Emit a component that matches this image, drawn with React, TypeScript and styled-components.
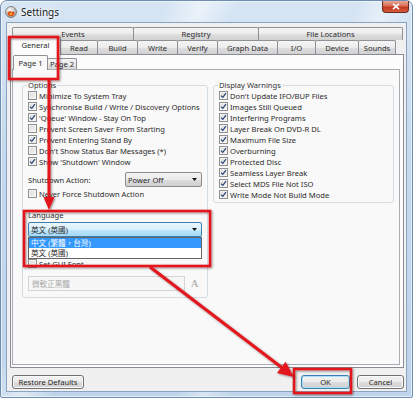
import styled, { createGlobalStyle } from "styled-components";

const GlobalStyle = createGlobalStyle`
  html, body {
    margin: 0;
    padding: 0;
    background: #ffffff;
  }
  body {
    font-family: "Noto Sans", "Noto Sans CJK TC", sans-serif;
    font-size: 7.6px;
    color: #2b2b2b;
  }
`;

const Stage = styled.div`
  position: relative;
  width: 415px;
  height: 400px;
  overflow: hidden;
`;

const Window = styled.div`
  width: 413px;
  height: 398px;
  box-sizing: border-box;
  border: 1px solid #6f8db0;
  border-radius: 7px 7px 2px 2px;
  padding: 0 5px 5px;
  display: flex;
  flex-direction: column;
  background:
    linear-gradient(
      115deg,
      rgba(255, 255, 255, 0) 0 28%,
      rgba(255, 255, 255, 0.5) 34%,
      rgba(255, 255, 255, 0) 40% 60%,
      rgba(255, 255, 255, 0.4) 65%,
      rgba(255, 255, 255, 0) 70%
    ),
    linear-gradient(180deg, #d6e5f4 0%, #c4d9ee 40%, #bed4ec 100%);
  box-shadow: inset 0 0 0 1px rgba(255, 255, 255, 0.55);
`;

const TitleBar = styled.div`
  height: 21px;
  margin: 0 -5px;
  padding: 0 3px 0 4px;
  display: flex;
  align-items: center;
  gap: 4px;
`;

const Title = styled.span`
  flex: 1;
  font-size: 10px;
  color: #1a1a1a;
  text-shadow: 0 0 6px #ffffff, 0 0 3px #ffffff;
`;

const CloseButton = styled.div`
  align-self: flex-start;
  width: 27px;
  height: 12px;
  box-sizing: border-box;
  border: 1px solid #6b2a1e;
  border-top: none;
  border-radius: 0 0 4px 4px;
  background: linear-gradient(#eaa897 0%, #d76d55 45%, #c2381f 55%, #d45c3c 100%);
  display: flex;
  align-items: center;
  justify-content: center;
`;

const Client = styled.div`
  flex: 1;
  background: #f0f0f0;
  border: 1px solid #8aa3bf;
  padding: 4px 2px 2px 3px;
  display: flex;
  flex-direction: column;
`;

const TabRow = styled.div<{ $h: number; $indent: number }>`
  display: flex;
  align-items: flex-start;
  height: ${(p) => p.$h}px;
  margin-left: ${(p) => p.$indent}px;
`;

const Tab = styled.div<{ $w: number; $active?: boolean }>`
  width: ${(p) => p.$w}px;
  height: ${(p) => (p.$active ? "18px" : "100%")};
  margin-top: ${(p) => (p.$active ? "-3px" : "0")};
  margin-right: -1px;
  box-sizing: border-box;
  border: 1px solid #8e9196;
  border-bottom: none;
  border-radius: 2px 2px 0 0;
  position: relative;
  z-index: ${(p) => (p.$active ? 2 : 0)};
  display: flex;
  align-items: center;
  justify-content: center;
  padding-bottom: ${(p) => (p.$active ? "3px" : "0")};
  white-space: nowrap;
  background: ${(p) =>
    p.$active
      ? "#fcfcfc"
      : "linear-gradient(#f4f4f4 0%, #ececec 50%, #dedede 51%, #d2d2d2 100%)"};
`;

const Panel = styled.div`
  flex: 1;
  border: 1px solid #898c95;
  background: #fcfcfc;
  display: flex;
  flex-direction: column;
`;

const PageRow = styled.div`
  display: flex;
  align-items: flex-start;
  height: 14px;
  padding-left: 2px;
`;

const PageTab = styled.div<{ $w: number; $active?: boolean }>`
  width: ${(p) => p.$w}px;
  height: ${(p) => (p.$active ? "15px" : "11px")};
  margin-top: ${(p) => (p.$active ? "0" : "3px")};
  margin-right: -1px;
  box-sizing: border-box;
  border: 1px solid #8e9196;
  border-bottom: none;
  border-radius: 2px 2px 0 0;
  position: relative;
  z-index: ${(p) => (p.$active ? 2 : 0)};
  display: flex;
  align-items: center;
  justify-content: center;
  padding-bottom: ${(p) => (p.$active ? "1px" : "0")};
  background: ${(p) =>
    p.$active ? "#f9f9f9" : "linear-gradient(#f4f4f4 0%, #e8e8e8 55%, #d6d6d6 100%)"};
`;

const PagePanel = styled.div`
  flex: 1;
  margin: 0 3px 2px 1px;
  border: 1px solid #a9acb2;
  background: #f9f9f9;
  display: grid;
  grid-template-columns: 186px 181px;
  column-gap: 5px;
  align-items: start;
  align-content: start;
  padding: 10px 0 0 9px;
`;

const Group = styled.fieldset<{ $pb: number }>`
  margin: 0;
  min-width: 0;
  padding: 0 5px ${(p) => p.$pb}px 5px;
  border: 1px solid #d3dce3;
  border-radius: 3px;
`;

const Legend = styled.legend`
  padding: 0 1px;
  margin-left: -1px;
  line-height: 10px;
  color: #333333;
`;

const Stack = styled.div`
  display: flex;
  flex-direction: column;
`;

const CheckRow = styled.div<{ $mt?: number }>`
  display: flex;
  align-items: center;
  gap: 2px;
  height: 11px;
  margin-top: ${(p) => p.$mt ?? 0}px;
  white-space: nowrap;
`;

const Box = styled.span`
  width: 9px;
  height: 9px;
  flex: none;
  box-sizing: border-box;
  border: 1px solid #8f8f8f;
  background: linear-gradient(135deg, #d9d9d9 0%, #f7f7f7 100%);
  box-shadow: inset 0 0 0 1px #f4f4f4;
  display: flex;
  align-items: center;
  justify-content: center;
`;

const FieldRow = styled.div<{ $mt: number }>`
  display: flex;
  align-items: center;
  justify-content: space-between;
  height: 15px;
  margin-top: ${(p) => p.$mt}px;
`;

const Label = styled.div<{ $mt: number }>`
  line-height: 10px;
  margin-top: ${(p) => p.$mt}px;
`;

const Select = styled.div<{ $w?: number; $hover?: boolean }>`
  width: ${(p) => (p.$w ? `${p.$w}px` : "100%")};
  height: 15px;
  box-sizing: border-box;
  border: 1px solid ${(p) => (p.$hover ? "#3c7fb1" : "#8c8c8c")};
  border-radius: 2px;
  padding: 0 4px 0 2px;
  display: flex;
  align-items: center;
  justify-content: space-between;
  background: ${(p) =>
    p.$hover
      ? "linear-gradient(#eaf6fd 0%, #d9f0fc 50%, #bee6fd 51%, #a7d9f5 100%)"
      : "linear-gradient(#f2f2f2 0%, #ebebeb 50%, #dddddd 51%, #cfcfcf 100%)"};
`;

const ComboWrap = styled.div`
  position: relative;
  margin-top: 2px;
`;

const DropList = styled.div`
  position: absolute;
  top: 100%;
  left: 0;
  right: 0;
  z-index: 5;
  border: 1px solid #646464;
  background: #ffffff;
`;

const DropItem = styled.div<{ $sel?: boolean }>`
  height: 10px;
  line-height: 10px;
  padding-left: 2px;
  color: ${(p) => (p.$sel ? "#ffffff" : "#1e1e1e")};
  background: ${(p) => (p.$sel ? "#3399ff" : "transparent")};
`;

const FontRow = styled.div`
  display: flex;
  align-items: center;
  gap: 6px;
  margin-top: 7px;
`;

const TextBox = styled.div`
  width: 157px;
  height: 15px;
  box-sizing: border-box;
  border: 1px solid #d5d5d5;
  background: #f7f7f7;
  padding-left: 3px;
  display: flex;
  align-items: center;
  color: #a8a8a8;
`;

const FontIcon = styled.span`
  font-family: "Liberation Serif", serif;
  font-size: 10px;
  font-weight: bold;
  color: #b4b4b4;
`;

const Footer = styled.div`
  display: flex;
  align-items: center;
  gap: 7px;
  height: 14px;
  margin-top: 7px;
  padding-left: 2px;
`;

const Spacer = styled.div`
  flex: 1;
`;

const Button = styled.div<{ $w: number; $default?: boolean }>`
  width: ${(p) => p.$w}px;
  height: 14px;
  box-sizing: border-box;
  border: 1px solid ${(p) => (p.$default ? "#3c7fb1" : "#707070")};
  border-radius: 3px;
  display: flex;
  align-items: center;
  justify-content: center;
  background: linear-gradient(#f2f2f2 0%, #ebebeb 50%, #dddddd 51%, #cfcfcf 100%);
  box-shadow: ${(p) =>
    p.$default ? "inset 0 0 0 1px #a9def5" : "inset 0 0 0 1px #fbfbfb"};
`;

const Marks = styled.svg`
  position: absolute;
  top: 0;
  left: 0;
  pointer-events: none;
  z-index: 10;
`;

const options: [string, boolean][] = [
  ["Minimize To System Tray", false],
  ["Synchronise Build / Write / Discovery Options", true],
  ["'Queue' Window - Stay On Top", true],
  ["Prevent Screen Saver From Starting", false],
  ["Prevent Entering Stand By", true],
  ["Don't Show Status Bar Messages (*)", false],
  ["Show 'Shutdown' Window", true],
];

const warnings = [
  "Don't Update IFO/BUP Files",
  "Images Still Queued",
  "Interfering Programs",
  "Layer Break On DVD-R DL",
  "Maximum File Size",
  "Overburning",
  "Protected Disc",
  "Seamless Layer Break",
  "Select MDS File Not ISO",
  "Write Mode Not Build Mode",
];

const topTabs: [string, number][] = [
  ["Events", 122],
  ["Registry", 126],
  ["File Locations", 145],
];

const mainTabs: [string, number][] = [
  ["General", 51],
  ["Read", 38],
  ["Build", 41],
  ["Write", 41],
  ["Verify", 41],
  ["Graph Data", 61],
  ["I/O", 39],
  ["Device", 44],
  ["Sounds", 38],
];

function Check({ on }: { on: boolean }) {
  return (
    <Box>
      {on ? (
        <svg width="7" height="7" viewBox="0 0 7 7">
          <path d="M1 3.6 L2.8 5.4 L6 1.2" fill="none" stroke="#2a4275" strokeWidth="1.2" />
        </svg>
      ) : null}
    </Box>
  );
}

function Arrow() {
  return (
    <svg width="5" height="3" viewBox="0 0 5 3">
      <path d="M0 0 H5 L2.5 3 Z" fill="#111" />
    </svg>
  );
}

function AppIcon() {
  return (
    <svg width="12" height="12" viewBox="0 0 12 12">
      <defs>
        <radialGradient id="disc" cx="40%" cy="35%" r="70%">
          <stop offset="0" stopColor="#ffffff" />
          <stop offset="1" stopColor="#9a9a9a" />
        </radialGradient>
      </defs>
      <circle cx="6" cy="6" r="5.5" fill="url(#disc)" stroke="#6d6d6d" strokeWidth="0.8" />
      <path d="M2.4 6.6 A3.6 3.6 0 0 0 9.6 6.6 Q8 4.6 6.6 6.2 Q5.4 3.6 2.4 6.6 Z" fill="#e0541c" />
      <path d="M4.3 8 Q6 5.8 7.6 8 Q6 9.4 4.3 8 Z" fill="#f7c23a" />
    </svg>
  );
}

function App() {
  return (
    <Stage>
      <GlobalStyle />
      <Window>
        <TitleBar>
          <AppIcon />
          <Title>Settings</Title>
          <CloseButton>
            <svg width="8" height="7" viewBox="0 0 8 7">
              <path d="M1 0.8 L7 6.2 M7 0.8 L1 6.2" stroke="#ffffff" strokeWidth="1.6" />
            </svg>
          </CloseButton>
        </TitleBar>
        <Client>
          <TabRow $h={13} $indent={2}>
            {topTabs.map(([t, w]) => (
              <Tab key={t} $w={w}>
                {t}
              </Tab>
            ))}
          </TabRow>
          <TabRow $h={14} $indent={0}>
            {mainTabs.map(([t, w], i) => (
              <Tab key={t} $w={w} $active={i === 0}>
                {t}
              </Tab>
            ))}
          </TabRow>
          <Panel>
            <PageRow>
              <PageTab $w={35} $active>
                Page 1
              </PageTab>
              <PageTab $w={30}>Page 2</PageTab>
            </PageRow>
            <PagePanel>
              <Group $pb={6}>
                <Legend>Options</Legend>
                <Stack>
                  {options.map(([t, on]) => (
                    <CheckRow key={t}>
                      <Check on={on} />
                      {t}
                    </CheckRow>
                  ))}
                  <FieldRow $mt={5}>
                    <span>Shutdown Action:</span>
                    <Select $w={77}>
                      Power Off
                      <Arrow />
                    </Select>
                  </FieldRow>
                  <CheckRow $mt={1}>
                    <Check on={false} />
                    Never Force Shutdown Action
                  </CheckRow>
                  <Label $mt={11}>Language</Label>
                  <ComboWrap>
                    <Select $hover>
                      英文 (英國)
                      <Arrow />
                    </Select>
                    <DropList>
                      <DropItem $sel>中文 (繁體，台灣)</DropItem>
                      <DropItem>英文 (英國)</DropItem>
                    </DropList>
                  </ComboWrap>
                  <CheckRow $mt={21}>
                    <Check on={false} />
                    Set GUI Font
                  </CheckRow>
                  <FontRow>
                    <TextBox>微軟正黑體</TextBox>
                    <FontIcon>A</FontIcon>
                  </FontRow>
                </Stack>
              </Group>
              <Group $pb={2}>
                <Legend>Display Warnings</Legend>
                <Stack>
                  {warnings.map((t) => (
                    <CheckRow key={t}>
                      <Check on />
                      {t}
                    </CheckRow>
                  ))}
                </Stack>
              </Group>
            </PagePanel>
          </Panel>
          <Footer>
            <Button $w={72}>Restore Defaults</Button>
            <Spacer />
            <Button $w={49} $default>
              OK
            </Button>
            <Button $w={47}>Cancel</Button>
          </Footer>
        </Client>
      </Window>
      <Marks width="415" height="400" viewBox="0 0 415 400">
        <defs>
          <filter id="shade" x="-10%" y="-10%" width="120%" height="120%">
            <feDropShadow dx="1" dy="1" stdDeviation="0.8" floodColor="#000" floodOpacity="0.45" />
          </filter>
        </defs>
        <g fill="none" stroke="#e2161c" strokeWidth="2.6" filter="url(#shade)">
          <rect x="9" y="37" width="49" height="42" />
          <rect x="24" y="211" width="186" height="55" />
          <rect x="294" y="369" width="57" height="24" />
          <line x1="49" y1="80" x2="49" y2="199" strokeWidth="3" />
          <line x1="150" y1="267" x2="283" y2="368.5" strokeWidth="3" />
        </g>
        <g fill="#e2161c" filter="url(#shade)">
          <polygon points="43.5,197 54.5,197 49,210" />
          <polygon points="294,377 277,372.9 285.5,361.7" />
        </g>
      </Marks>
    </Stage>
  );
}

export default App;
